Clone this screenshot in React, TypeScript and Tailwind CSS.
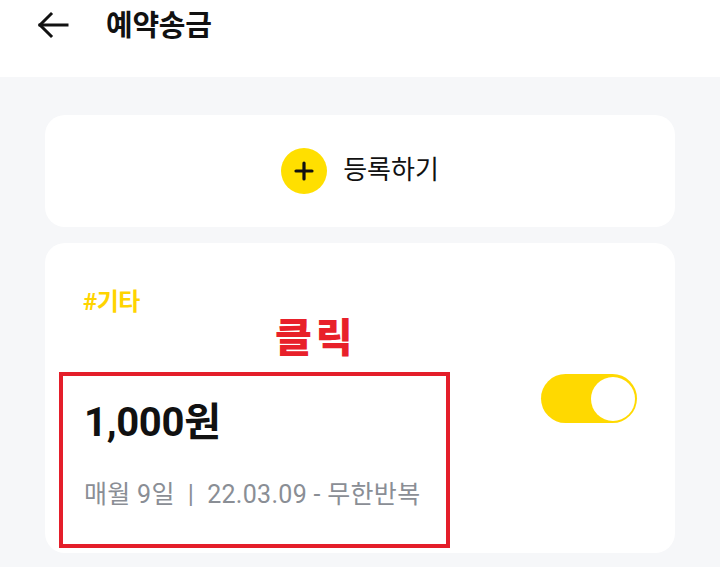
import React from "react";

export default function App() {
  return (
    <div className="w-[720px] h-[567px] overflow-hidden bg-[#f6f7f9]" style={{ fontFamily: 'Roboto, "Noto Sans CJK KR", "Noto Sans", sans-serif' }}>
      <div className="h-[77px] bg-white flex items-center">
        <div className="ml-[36px] w-[34px] h-[34px] flex items-center justify-center -mt-[28px]">
          <svg width="34" height="34" viewBox="0 0 34 34" fill="none" stroke="#111" strokeWidth="3" strokeLinecap="square">
            <path d="M4 17H31" />
            <path d="M15 6L4 17L15 28" strokeLinejoin="miter" />
          </svg>
        </div>
        <div className="ml-[36px] -mt-[25px] text-[29px] font-bold text-[#111] leading-none tracking-[-0.3px]">예약송금</div>
      </div>
      <div className="px-[45px] pt-[38px] flex flex-col gap-[16px] w-[720px]">
        <div className="w-[630px] h-[112px] bg-white rounded-[20px] flex items-center justify-center gap-[16px]">
          <div className="w-[46px] h-[46px] rounded-full bg-[#ffdf00] flex items-center justify-center">
            <svg width="22" height="22" viewBox="0 0 22 22" stroke="#111" strokeWidth="3.2" strokeLinecap="round">
              <path d="M11 3V19M3 11H19" />
            </svg>
          </div>
          <div className="text-[26px] text-[#111] leading-none -mt-[2px]">등록하기</div>
        </div>
        <div className="w-[630px] h-[310px] bg-white rounded-[20px] relative">
          <div className="absolute left-[38px] top-[47px] text-[24px] font-bold text-[#ffd400] leading-none tracking-[-0.5px]">#기타</div>
          <div className="absolute left-[230px] top-[76px] text-[40px] font-black text-[#e8202a] leading-none tracking-[4px]">클릭</div>
          <div className="absolute left-[14px] top-[129px] w-[391px] h-[176px] border-[4px] border-[#e41e2a] flex flex-col pl-[21px]">
            <div className="mt-[27px] text-[40px] font-bold text-[#111] leading-none tracking-[-0.3px]">1,000원</div>
            <div className="mt-[39px] text-[25px] text-[#8a8e95] leading-none whitespace-nowrap tracking-[0.3px]">매월 9일 &nbsp;|&nbsp; 22.03.09 - 무한반복</div>
          </div>
          <div className="absolute left-[496px] top-[131px] w-[96px] h-[49px] rounded-full bg-[#ffd900] flex items-center justify-end pr-[2px]">
            <div className="w-[44px] h-[44px] rounded-full bg-white" />
          </div>
        </div>
      </div>
    </div>
  );
}
